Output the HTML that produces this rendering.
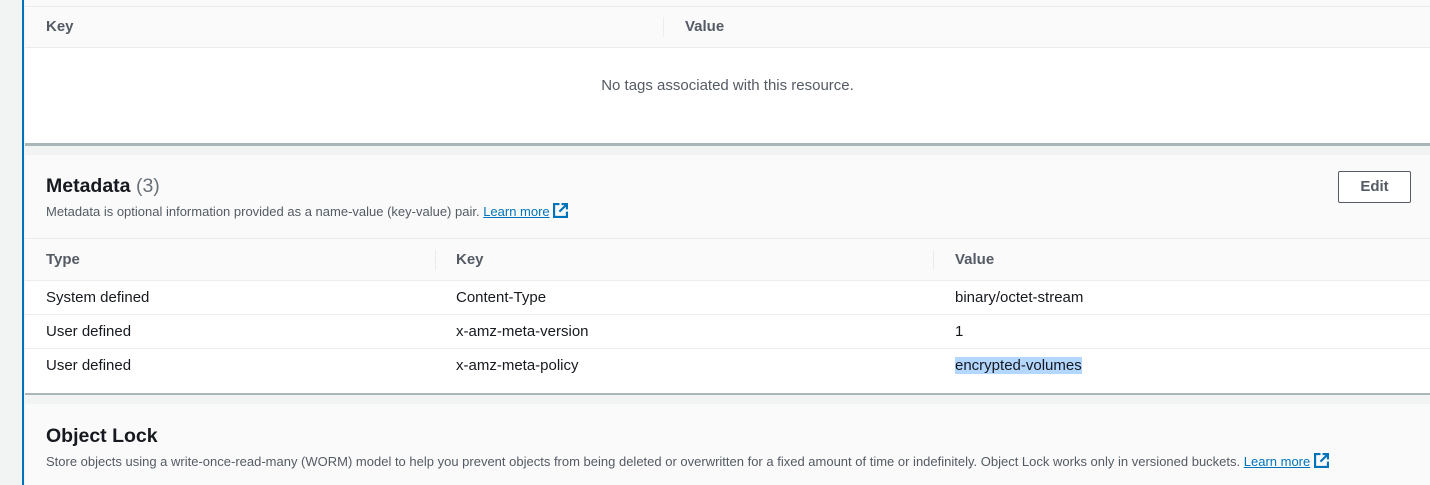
<!DOCTYPE html><html><head><style>
body{margin:0;width:1430px;height:485px;overflow:hidden;background:#f2f3f3;font-family:"Liberation Sans",sans-serif;color:#16191f;position:relative}
.a{position:absolute}
.c{left:25px;right:0}
.th{font-weight:bold;font-size:15px;color:#545b64}
.td{font-size:15px;color:#16191f}
.sep{width:1px;background:#eaeded;height:20px}
.h2{font-weight:bold;font-size:19.5px}
.desc{font-size:13px;color:#545b64}
a{color:#0073bb;text-decoration:underline}
</style></head><body>
<div class="a" style="left:22px;top:0;width:2px;height:485px;background:#0073bb"></div>
<div class="a c" style="top:0;height:6px;background:#fafafa;border-bottom:1px solid #eaeded"></div>
<div class="a c" style="top:7px;height:40px;background:#fafafa;border-bottom:1px solid #eaeded"></div>
<div class="a th" style="left:46px;top:18px">Key</div>
<div class="a sep" style="left:663px;top:17px"></div>
<div class="a th" style="left:685px;top:18px">Value</div>
<div class="a c" style="top:48px;height:95px;background:#fff"></div>
<div class="a td" style="left:25px;right:0;top:77px;text-align:center;color:#545b64">No tags associated with this resource.</div>
<div class="a c" style="top:143px;height:3px;background:#aab7b8"></div>
<div class="a c" style="top:155px;height:83px;background:#fafafa;border-bottom:1px solid #eaeded"></div>
<div class="a h2" style="left:46px;top:175px">Metadata <span style="font-weight:normal;color:#687078">(3)</span></div>
<div class="a desc" style="left:46px;top:203px">Metadata is optional information provided as a name-value (key-value) pair. <a>Learn more</a> <svg width="15" height="15" viewBox="0 0 14 14" style="vertical-align:-2px"><path d="M6 1H1v12h12V8M8 1h5v5M13 1L6 8" fill="none" stroke="#0073bb" stroke-width="2"/></svg></div>
<div class="a" style="left:1338px;top:171px;width:71px;height:30px;border:1px solid #545b64;border-radius:2px;background:#fff;font-weight:bold;font-size:15px;color:#545b64;text-align:center;line-height:30px">Edit</div>
<div class="a c" style="top:239px;height:41px;background:#fafafa;border-bottom:1px solid #eaeded"></div>
<div class="a th" style="left:46px;top:251px">Type</div>
<div class="a sep" style="left:435px;top:250px"></div>
<div class="a th" style="left:456px;top:251px">Key</div>
<div class="a sep" style="left:933px;top:250px"></div>
<div class="a th" style="left:955px;top:251px">Value</div>
<div class="a c" style="top:281px;height:33px;background:#fff;border-bottom:1px solid #eaeded"></div>
<div class="a c" style="top:315px;height:33px;background:#fff;border-bottom:1px solid #eaeded"></div>
<div class="a c" style="top:349px;height:44px;background:#fff"></div>
<div class="a td" style="left:46px;top:289px">System defined</div><div class="a td" style="left:456px;top:289px">Content-Type</div><div class="a td" style="left:955px;top:289px">binary/octet-stream</div>
<div class="a td" style="left:46px;top:323px">User defined</div><div class="a td" style="left:456px;top:323px">x-amz-meta-version</div><div class="a td" style="left:955px;top:323px">1</div>
<div class="a td" style="left:46px;top:357px">User defined</div><div class="a td" style="left:456px;top:357px">x-amz-meta-policy</div><div class="a td" style="left:955px;top:357px;background:#b3d7fe">encrypted-volumes</div>
<div class="a c" style="top:393px;height:2px;background:#aab7b8"></div>
<div class="a c" style="top:404px;height:81px;background:#fafafa"></div>
<div class="a h2" style="left:46px;top:425px">Object Lock</div>
<div class="a desc" style="left:46px;top:453px;white-space:nowrap">Store objects using a write-once-read-many (WORM) model to help you prevent objects from being deleted or overwritten for a fixed amount of time or indefinitely. Object Lock works only in versioned buckets. <a>Learn more</a> <svg width="15" height="15" viewBox="0 0 14 14" style="vertical-align:-2px"><path d="M6 1H1v12h12V8M8 1h5v5M13 1L6 8" fill="none" stroke="#0073bb" stroke-width="2"/></svg></div>
</body></html>
